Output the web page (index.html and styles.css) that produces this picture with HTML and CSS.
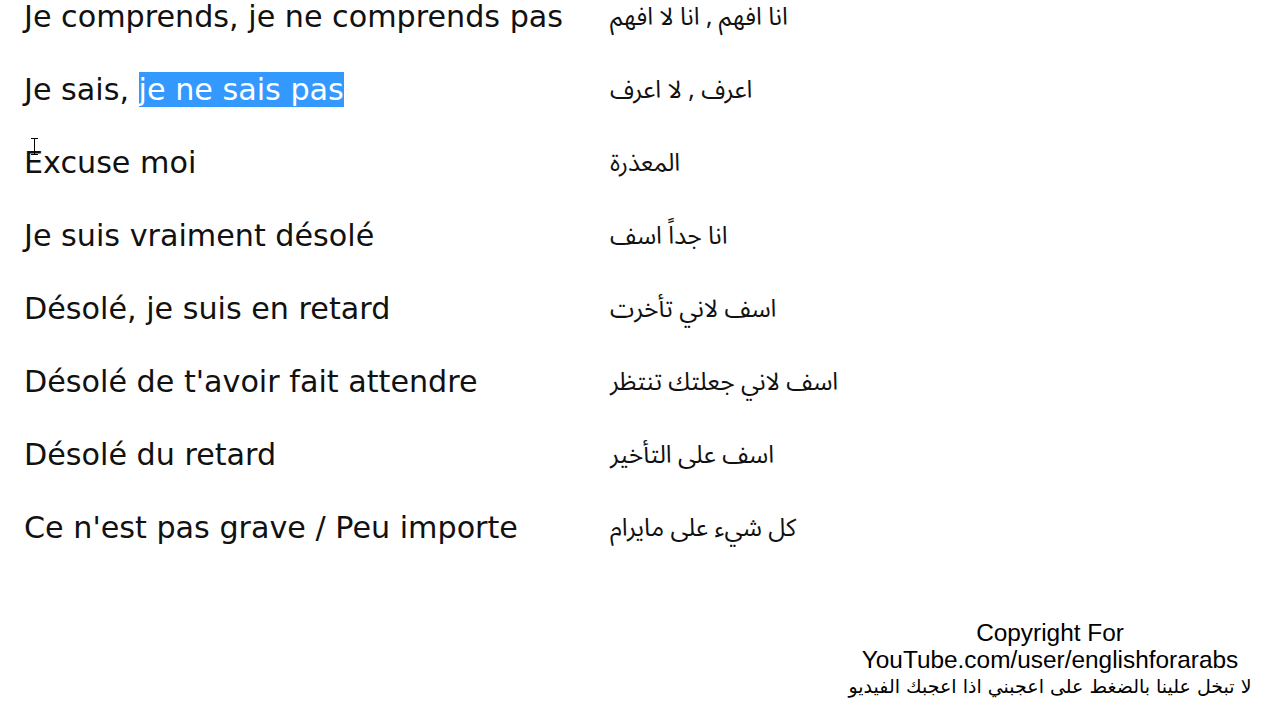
FILE: index.html
```html
<!DOCTYPE html>
<html lang="fr">
<head>
<meta charset="utf-8">
<title>Phrases</title>
<link rel="stylesheet" href="styles.css">
</head>
<body>
<div class="page">
  <div class="rows">
    <div class="row"><span class="fr">Je comprends, je ne comprends pas</span><span class="ar" dir="rtl">انا افهم , انا لا افهم</span></div>
    <div class="row"><span class="fr">Je sais, <span class="sel">je ne sais pas</span></span><span class="ar" dir="rtl">اعرف , لا اعرف</span></div>
    <div class="row"><span class="fr cursor-host">Excuse moi<svg class="ibeam" width="9" height="17" viewBox="0 0 9 17"><path d="M1 0.5h7M4.5 0.5v16M1 16.5h7" stroke="#000" stroke-width="1" fill="none"/></svg></span><span class="ar" dir="rtl">المعذرة</span></div>
    <div class="row"><span class="fr">Je suis vraiment désolé</span><span class="ar" dir="rtl">انا جداً اسف</span></div>
    <div class="row"><span class="fr">Désolé, je suis en retard</span><span class="ar" dir="rtl">اسف لاني تأخرت</span></div>
    <div class="row"><span class="fr">Désolé de t'avoir fait attendre</span><span class="ar" dir="rtl">اسف لاني جعلتك تنتظر</span></div>
    <div class="row"><span class="fr">Désolé du retard</span><span class="ar" dir="rtl">اسف على التأخير</span></div>
    <div class="row"><span class="fr">Ce n'est pas grave / Peu importe</span><span class="ar" dir="rtl">كل شيء على مايرام</span></div>
  </div>
  <div class="footer">
    <div>Copyright For</div>
    <div>YouTube.com/user/englishforarabs</div>
    <div class="footer-ar" dir="rtl">لا تبخل علينا بالضغط على اعجبني اذا اعجبك الفيديو</div>
  </div>
</div>
</body>
</html>
```
FILE: styles.css
```css
html, body {
  margin: 0;
  padding: 0;
  background: #fff;
}
.page {
  width: 1280px;
  height: 720px;
  overflow: hidden;
  display: flex;
  flex-direction: column;
}
.rows {
  margin-top: -20px;
  padding-left: 24px;
}
.row {
  display: grid;
  grid-template-columns: 586px auto;
  height: 73px;
  align-items: center;
}
.fr {
  font-family: "DejaVu Sans", Verdana, sans-serif;
  font-size: 30.2px;
  line-height: 36px;
  color: #111;
  white-space: nowrap;
}
.sel {
  background: #3399ff;
  color: #fff;
}
.cursor-host {
  position: relative;
}
.ibeam {
  position: absolute;
  left: 6px;
  top: -7px;
}
.ar {
  font-family: "Noto Sans Arabic", "DejaVu Sans", Arial, sans-serif;
  font-size: 24.5px;
  line-height: 30px;
  color: #111;
  text-align: left;
  justify-self: start;
  white-space: nowrap;
}
.footer {
  margin-top: auto;
  margin-bottom: 20px;
  margin-left: auto;
  margin-right: 20px;
  width: 420px;
  text-align: center;
  font-family: "Liberation Sans", Arial, sans-serif;
  font-size: 24.4px;
  line-height: 27px;
  color: #000;
}
.footer-ar {
  font-family: "DejaVu Sans", Arial, sans-serif;
  font-size: 19px;
}
```
